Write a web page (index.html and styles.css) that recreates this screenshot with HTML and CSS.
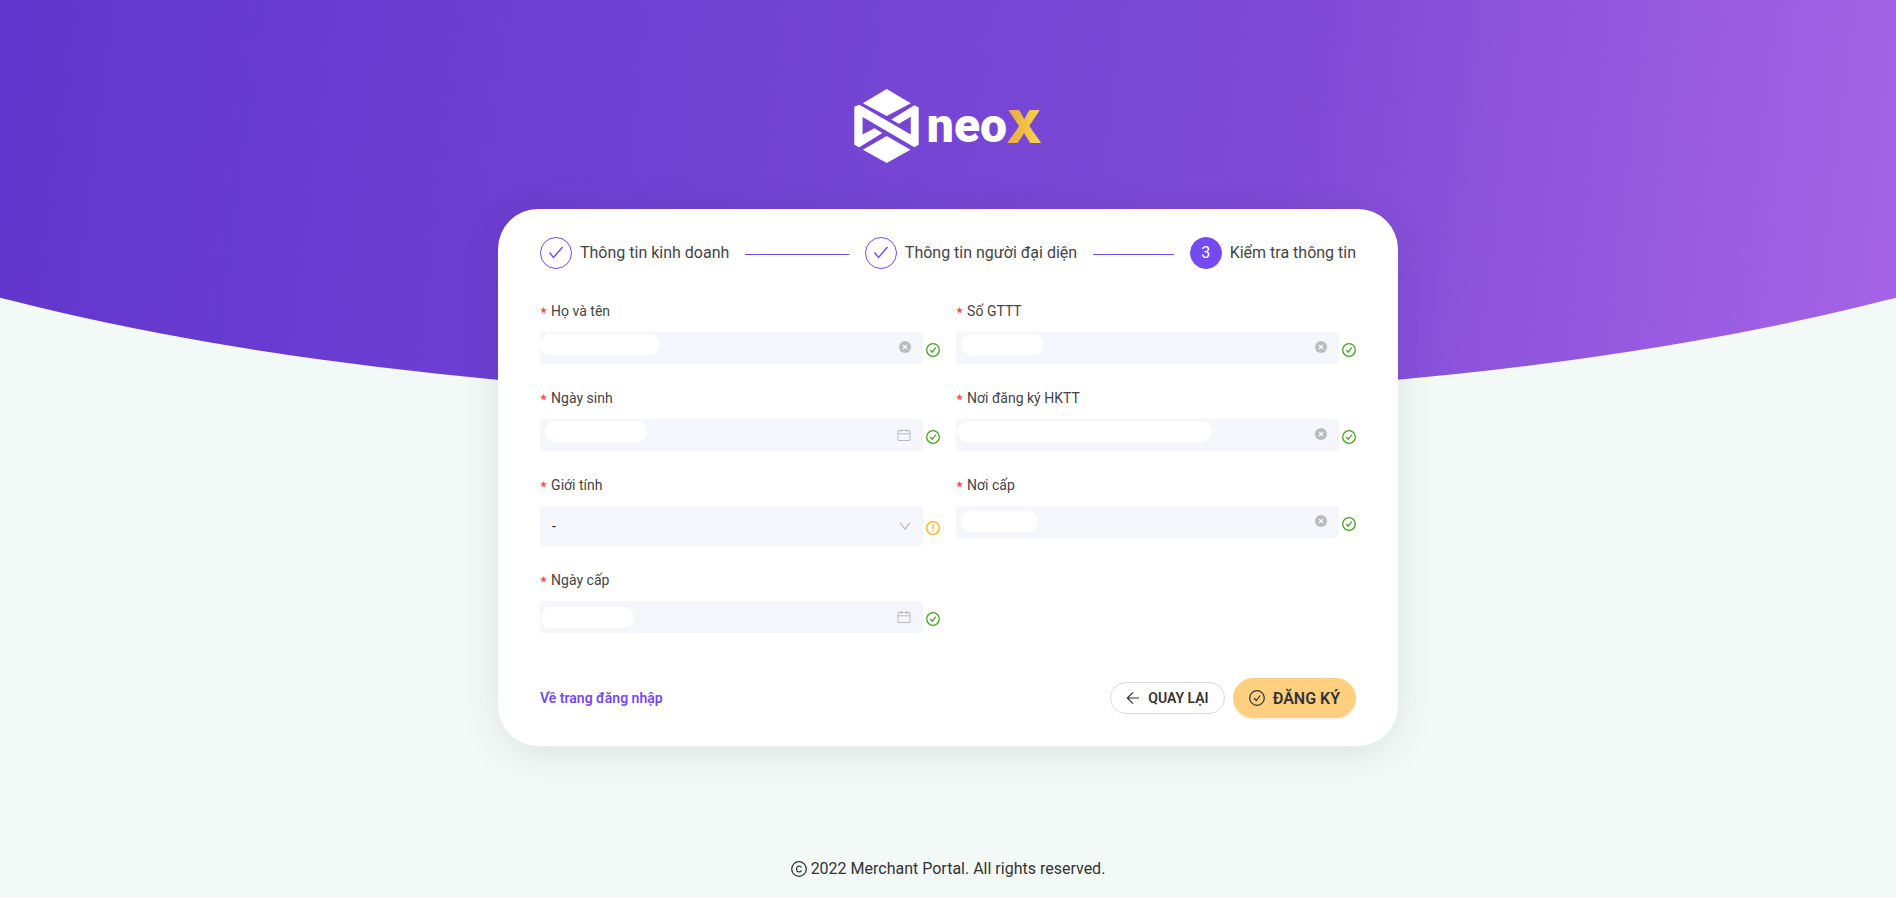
FILE: index.html
```html
<!DOCTYPE html>
<html lang="vi">
<head>
    <meta charset="UTF-8">
    <meta name="viewport" content="width=device-width, initial-scale=1.0">
    <title>Merchant Portal</title>
    <link rel="stylesheet" href="styles.css">
</head>
<body>
    <!-- Shared icons -->
    <svg class="sprite" aria-hidden="true">
        <symbol id="i-check" viewBox="0 0 16 16"><path d="M1.5 7.5 5.5 12.5 14.5 2" fill="none" stroke="currentColor" stroke-width="1.4"/></symbol>
        <symbol id="i-ok" viewBox="0 0 14 14"><circle cx="7" cy="7" r="6.3" fill="none" stroke="currentColor" stroke-width="1.3"/><path d="M4.3 7 6.3 9.2 9.8 4.7" fill="none" stroke="currentColor" stroke-width="1.2"/></symbol>
        <symbol id="i-warn" viewBox="0 0 14 14"><circle cx="7" cy="7" r="6.3" fill="none" stroke="currentColor" stroke-width="1.3"/><path d="M7 3.3V8M7 9.2V10.5" fill="none" stroke="currentColor" stroke-width="1.3"/></symbol>
        <symbol id="i-clear" viewBox="0 0 12 12"><circle cx="6" cy="6" r="6" fill="currentColor"/><path d="M4 4 8 8M8 4 4 8" stroke="#fff" stroke-width="1.1"/></symbol>
        <symbol id="i-calendar" viewBox="0 0 14 14"><path d="M1 2.5H13V12.5H1ZM1 5.8H13M4.3 .8V4M9.7 .8V4" fill="none" stroke="currentColor"/></symbol>
        <symbol id="i-down" viewBox="0 0 12 12"><path d="M1.3 2.8 6 9.2 10.7 2.8" fill="none" stroke="currentColor" stroke-width="1.1"/></symbol>
        <symbol id="i-back" viewBox="0 0 14 14"><path d="M13 7H1.5M7 1.3 1.3 7 7 12.7" fill="none" stroke="currentColor" stroke-width="1.2"/></symbol>
        <symbol id="i-done" viewBox="0 0 16 16"><circle cx="8" cy="8" r="7.3" fill="none" stroke="currentColor" stroke-width="1.2"/><path d="M5 8 7.3 10.5 11.2 5.5" fill="none" stroke="currentColor" stroke-width="1.2"/></symbol>
        <symbol id="i-copyright" viewBox="0 0 16 16"><circle cx="8" cy="8" r="7.3" fill="none" stroke="currentColor" stroke-width="1.3"/><path d="M10.4 6.6A2.5 2.5 0 0 0 5.6 7.3V8.7A2.5 2.5 0 0 0 10.4 9.4" fill="none" stroke="currentColor" stroke-width="1.3"/></symbol>
    </svg>

    <div class="page">
        <header class="logo">
            <svg class="logo-mark" viewBox="39 27 195 224" aria-hidden="true">
                <path fill="#fff" d="M137 27 210 70 137 109 65 70ZM137 169 209 211 137 251 65 211Z"/>
                <path fill="#fff" fill-rule="evenodd" d="M39 81 54 75 210 165V111L174 132 151 119 221 76 234 83V196L221 203 64 112V165L100 146 124 160 54 203 39 196Z"/>
            </svg>
            <span class="logo-text">neo</span><span class="logo-x">X</span>
        </header>

        <main class="card">
            <ol class="steps">
                <li class="step"><span class="step-icon"><svg><use href="#i-check"/></svg></span>Thông tin kinh doanh</li>
                <li class="step"><span class="step-icon"><svg><use href="#i-check"/></svg></span>Thông tin người đại diện</li>
                <li class="step active"><span class="step-icon">3</span>Kiểm tra thông tin</li>
            </ol>

            <form>
                <div class="fields">
                    <div class="field">
                        <label for="fullName">Họ và tên</label>
                        <div class="control">
                            <div class="box">
                                <input type="text" id="fullName">
                                <span class="mask mask-name"></span>
                                <button type="button" class="clear" aria-label="Xóa"><svg><use href="#i-clear"/></svg></button>
                            </div>
                            <svg class="status"><use href="#i-ok"/></svg>
                        </div>
                    </div>
                    <div class="field">
                        <label for="idNumber">Số GTTT</label>
                        <div class="control">
                            <div class="box">
                                <input type="text" id="idNumber">
                                <span class="mask mask-id"></span>
                                <button type="button" class="clear" aria-label="Xóa"><svg><use href="#i-clear"/></svg></button>
                            </div>
                            <svg class="status"><use href="#i-ok"/></svg>
                        </div>
                    </div>
                    <div class="field">
                        <label for="birthday">Ngày sinh</label>
                        <div class="control">
                            <div class="box">
                                <input type="text" id="birthday">
                                <span class="mask mask-birthday"></span>
                                <svg class="suffix"><use href="#i-calendar"/></svg>
                            </div>
                            <svg class="status"><use href="#i-ok"/></svg>
                        </div>
                    </div>
                    <div class="field">
                        <label for="address">Nơi đăng ký HKTT</label>
                        <div class="control">
                            <div class="box">
                                <input type="text" id="address">
                                <span class="mask mask-address"></span>
                                <button type="button" class="clear" aria-label="Xóa"><svg><use href="#i-clear"/></svg></button>
                            </div>
                            <svg class="status"><use href="#i-ok"/></svg>
                        </div>
                    </div>
                    <div class="field">
                        <label for="gender">Giới tính</label>
                        <div class="control">
                            <div class="box box-large">
                                <select id="gender">
                                    <option>-</option>
                                </select>
                                <svg class="arrow"><use href="#i-down"/></svg>
                            </div>
                            <svg class="status warning"><use href="#i-warn"/></svg>
                        </div>
                    </div>
                    <div class="field">
                        <label for="issuePlace">Nơi cấp</label>
                        <div class="control">
                            <div class="box">
                                <input type="text" id="issuePlace">
                                <span class="mask mask-place"></span>
                                <button type="button" class="clear" aria-label="Xóa"><svg><use href="#i-clear"/></svg></button>
                            </div>
                            <svg class="status"><use href="#i-ok"/></svg>
                        </div>
                    </div>
                    <div class="field">
                        <label for="issueDate">Ngày cấp</label>
                        <div class="control">
                            <div class="box">
                                <input type="text" id="issueDate">
                                <span class="mask mask-date"></span>
                                <svg class="suffix"><use href="#i-calendar"/></svg>
                            </div>
                            <svg class="status"><use href="#i-ok"/></svg>
                        </div>
                    </div>
                </div>

                <div class="actions">
                    <a href="#">Về trang đăng nhập</a>
                    <button type="button" class="btn"><svg><use href="#i-back"/></svg>QUAY LẠI</button>
                    <button type="submit" class="btn btn-primary"><svg><use href="#i-done"/></svg>ĐĂNG KÝ</button>
                </div>
            </form>
        </main>

        <footer class="footer"><svg><use href="#i-copyright"/></svg>2022 Merchant Portal. All rights reserved.</footer>
    </div>
</body>
</html>
```

FILE: styles.css
```css
* {
    box-sizing: border-box;
}

body {
    margin: 0;
    font-family: Roboto, "Noto Sans", sans-serif;
    font-size: 14px;
    line-height: 22px;
    color: #333;
    background-color: #f3f9f7;
}

.sprite {
    display: none;
}

.page {
    position: relative;
    display: flex;
    flex-direction: column;
    align-items: center;
    min-height: 100vh;
    overflow: hidden;
}

/* Purple curve behind the card */
.page::before {
    content: "";
    position: absolute;
    z-index: -1;
    top: 0;
    left: 0;
    width: 100%;
    height: 400px;
    background: linear-gradient(97deg, #6236ce 0%, #7645d4 48%, #7e49d6 67%, #8f55dd 80%, #a564e7 100%);
    clip-path: ellipse(70% 341px at 50% 59px);
}

.logo {
    display: flex;
    align-items: center;
    height: 74px;
    margin-top: 89px;
}

.logo-mark {
    width: 65px;
    height: 74px;
    margin-right: 8px;
}

.logo-text {
    font-size: 48px;
    line-height: 56px;
    font-weight: 900;
    color: #fff;
}

.logo-x {
    margin-left: -1px;
    font-family: Inter, sans-serif;
    font-size: 46px;
    line-height: 56px;
    font-weight: 900;
    color: transparent;
    background: linear-gradient(90deg, #eba53f, #f6d94b);
    background-clip: text;
    -webkit-background-clip: text;
}

.card {
    width: 900px;
    max-width: 100%;
    margin-top: 46px;
    padding: 28px 42px;
    background: #fff;
    border-radius: 40px;
    box-shadow: 0 8px 40px rgba(0, 50, 30, 0.1);
}

.steps {
    display: flex;
    margin: 0 0 31px;
    padding: 0;
    list-style: none;
    font-size: 16px;
    line-height: 32px;
    color: #444;
}

.step {
    display: flex;
    flex: 1;
    align-items: center;
    white-space: nowrap;
}

.step::after {
    content: "";
    flex: 1;
    height: 2px;
    margin: 0 16px;
    border-bottom: 1px solid #764af1;
}

.step.active {
    flex: none;
}

.step.active::after {
    display: none;
}

.step-icon {
    display: flex;
    align-items: center;
    justify-content: center;
    width: 32px;
    height: 32px;
    margin-right: 8px;
    border: 1px solid #764af1;
    border-radius: 50%;
    color: #764af1;
}

.step-icon svg {
    width: 16px;
    height: 16px;
}

.active .step-icon {
    background: #764af1;
    color: #fff;
}

.fields {
    display: grid;
    grid-template-columns: 1fr 1fr;
    column-gap: 16px;
    row-gap: 23px;
    align-items: start;
}

.field label {
    display: flex;
    align-items: center;
    margin-bottom: 10px;
    color: #444;
}

.field label::before {
    content: "*";
    height: 18px;
    margin-right: 4px;
    color: #ff4d4f;
    font-family: "Noto Sans CJK SC", sans-serif;
    font-weight: bold;
}

.control {
    display: flex;
    align-items: center;
    gap: 3px;
}

.box {
    position: relative;
    display: flex;
    flex: 1;
    align-items: center;
    height: 32px;
    padding-right: 12px;
    background: #f5f6fb;
    border-radius: 4px;
    color: #bbb;
}

.box-large {
    height: 40px;
}

.box input,
.box select {
    flex: 1;
    min-width: 0;
    height: 100%;
    padding: 0 12px;
    border: 0;
    outline: none;
    background: transparent;
    appearance: none;
    font: inherit;
    color: #222;
}

.clear {
    display: flex;
    padding: 0 0 2px;
    border: 0;
    background: none;
    color: inherit;
    cursor: pointer;
}

.clear svg,
.arrow {
    width: 12px;
    height: 12px;
}

.suffix {
    width: 14px;
    height: 14px;
}

.status {
    width: 14px;
    height: 14px;
    margin-top: 4px;
    color: #43a41c;
}

.status.warning {
    color: #faad14;
}

/* Covers over the personal data */
.mask {
    position: absolute;
    top: 2px;
    left: 5px;
    height: 21px;
    border-radius: 12px;
    background: #fff;
}

.mask-name {
    left: 0;
    width: 120px;
}

.mask-id {
    width: 83px;
}

.mask-birthday {
    width: 102px;
}

.mask-address {
    left: 1px;
    width: 255px;
}

.mask-place {
    top: 5px;
    width: 77px;
}

.mask-date {
    top: 6px;
    left: 1px;
    width: 93px;
}

.actions {
    display: flex;
    align-items: center;
    gap: 8px;
    margin-top: 45px;
}

.actions a {
    margin-right: auto;
    color: #764af1;
    font-weight: 600;
    text-decoration: none;
}

.btn {
    display: flex;
    align-items: center;
    gap: 8px;
    height: 32px;
    padding: 0 15px;
    border: 1px solid #d9d9d9;
    border-radius: 32px;
    background: #fff;
    color: #333;
    font: 600 14px Roboto, sans-serif;
    cursor: pointer;
}

.btn svg {
    width: 14px;
    height: 14px;
}

.btn-primary {
    height: 40px;
    border-color: #ffcf80;
    border-radius: 40px;
    background: #ffcf80;
    box-shadow: 0 2px 0 rgba(0, 0, 0, 0.05);
    font-size: 16px;
}

.btn-primary svg {
    width: 16px;
    height: 16px;
}

.footer {
    display: flex;
    align-items: center;
    gap: 4px;
    margin-top: auto;
    padding: 16px 0;
    font-size: 16px;
    line-height: 26px;
}

.footer svg {
    width: 16px;
    height: 16px;
}
```
